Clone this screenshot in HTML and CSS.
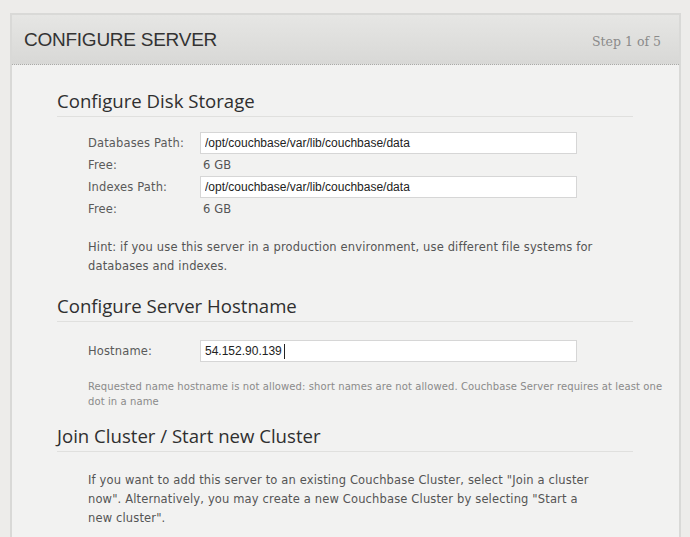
FILE: index.html
```html
<!DOCTYPE html>
<html>
<head>
<meta charset="utf-8">
<link rel="stylesheet" href="styles.css">
</head>
<body>
<div class="panel">
  <div class="header">
    <h1 class="title">CONFIGURE SERVER</h1>
    <span class="step">Step 1 of 5</span>
  </div>
  <div class="content">
    <section class="section">
      <h2 class="heading">Configure Disk Storage</h2>
      <div class="form">
        <label class="label">Databases Path:</label>
        <div class="field"><input class="input" type="text" value="/opt/couchbase/var/lib/couchbase/data"></div>
        <span class="label">Free:</span>
        <span class="value">6 GB</span>
        <label class="label">Indexes Path:</label>
        <div class="field"><input class="input" type="text" value="/opt/couchbase/var/lib/couchbase/data"></div>
        <span class="label">Free:</span>
        <span class="value">6 GB</span>
      </div>
      <p class="hint">Hint: if you use this server in a production environment, use different file systems for databases and indexes.</p>
    </section>
    <section class="section">
      <h2 class="heading">Configure Server Hostname</h2>
      <div class="form host">
        <label class="label">Hostname:</label>
        <div class="field"><input class="input" type="text" value="54.152.90.139"><span class="caret"></span></div>
      </div>
      <p class="error">Requested name hostname is not allowed: short names are not allowed. Couchbase Server requires at least one dot in a name</p>
    </section>
    <section class="section join">
      <h2 class="heading">Join Cluster / Start new Cluster</h2>
      <p class="hint join-text">If you want to add this server to an existing Couchbase Cluster, select "Join a cluster now". Alternatively, you may create a new Couchbase Cluster by selecting "Start a new cluster".</p>
    </section>
  </div>
</div>
</body>
</html>
```

FILE: styles.css
```css
html, body {
  margin: 0;
  padding: 0;
}
body {
  background: #edecea;
  padding: 13px 9px 0 10px;
  height: 537px;
  box-sizing: border-box;
  overflow: hidden;
  font-family: "DejaVu Sans", Verdana, sans-serif;
}
.panel {
  border: 2px solid #d9d9d7;
  border-bottom: none;
  background: #f2f2f1;
  height: 560px;
}
.header {
  height: 49px;
  background: linear-gradient(#e6e6e4, #d8d8d6);
  border-bottom: 1px dotted #a9a9a7;
  display: flex;
  align-items: center;
  justify-content: space-between;
  padding: 0 18px 0 12px;
}
.title {
  margin: 0;
  font-family: "Liberation Sans", Arial, sans-serif;
  font-weight: normal;
  font-size: 19px;
  color: #333;
  letter-spacing: -0.25px;
}
.step {
  font-family: "DejaVu Serif", Georgia, serif;
  font-size: 12.5px;
  color: #8a8a8a;
  padding-top: 4px;
}
.content {
  padding: 24px 45px 0 45px;
}
.heading {
  margin: 0;
  font-family: "Open Sans", "DejaVu Sans", sans-serif;
  font-weight: normal;
  font-size: 18.6px;
  line-height: 24px;
  color: #2f2f2f;
  padding-bottom: 3px;
  border-bottom: 1px solid #e0e0de;
  width: 576px;
}
.form {
  display: grid;
  grid-template-columns: 112px 377px;
  grid-auto-rows: 22px;
  align-items: center;
  margin: 15px 0 0 31px;
  font-size: 11.5px;
  letter-spacing: 0.15px;
  color: #555;
}
.form.host {
  margin-top: 18px;
}
.label {
  color: #5a5a5a;
}
.value {
  color: #555;
  padding-left: 3px;
}
.field {
  position: relative;
  height: 22px;
}
.input {
  box-sizing: border-box;
  width: 377px;
  height: 22px;
  border: 1px solid #d6d6d6;
  background: #fff;
  font-family: "Liberation Sans", Arial, sans-serif;
  font-size: 12px;
  letter-spacing: 0;
  color: #222;
  padding: 0 4px;
  margin: 0;
  outline: none;
}
.caret {
  position: absolute;
  left: 84px;
  top: 4px;
  width: 1px;
  height: 15px;
  background: #222;
}
.hint {
  margin: 18px 0 0 31px;
  font-size: 11.5px;
  letter-spacing: 0.15px;
  line-height: 19px;
  color: #555;
  width: 512px;
}
.hint.join-text {
  margin-top: 19px;
}
.error {
  margin: 17px 0 0 31px;
  font-size: 10px;
  letter-spacing: 0.1px;
  line-height: 15px;
  color: #8a8a8a;
  width: 580px;
}
.section + .section {
  margin-top: 18px;
}
.section.join {
  margin-top: 15px;
}
```
